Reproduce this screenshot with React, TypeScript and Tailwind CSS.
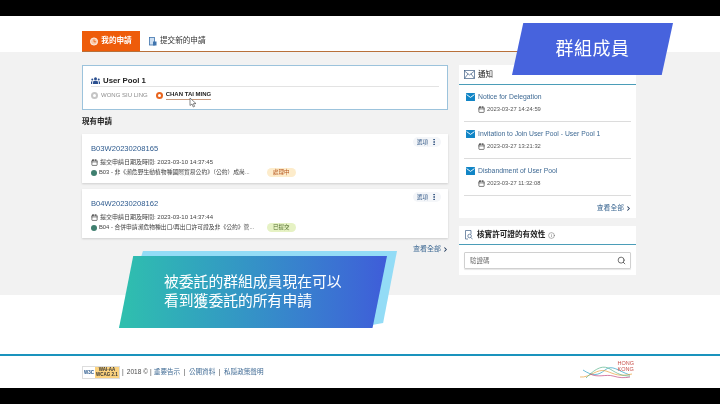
import { Calendar, ChevronRight, Info, MoreVertical, Search } from "lucide-react";

const font = "font-['Liberation_Sans','Noto_Sans_CJK_TC',sans-serif]";

const applications = [
  {
    id: "B03W20230208165",
    submitted: "提交申請日期及時間: 2023-03-10 14:37:45",
    desc: "B03 - 非《瀕危野生動植物種國際貿易公約》（公約）成尚...",
    status: "處理中",
    badge: "bg-[#fdeccb] text-[#b5541c]",
  },
  {
    id: "B04W20230208162",
    submitted: "提交申請日期及時間: 2023-03-10 14:37:44",
    desc: "B04 - 合併申請瀕危物種出口/再出口許可證及非《公約》管...",
    status: "已提交",
    badge: "bg-[#e6f2c4] text-[#4f6b2a]",
  },
];

const notices = [
  { title: "Notice for Delegation", time: "2023-03-27 14:24:59" },
  { title: "Invitation to Join User Pool - User Pool 1", time: "2023-03-27 13:21:32" },
  { title: "Disbandment of User Pool", time: "2023-03-27 11:32:08" },
];

function Person({ className }: { className: string }) {
  return (
    <span className={`flex h-[7px] w-[7px] shrink-0 items-center justify-center rounded-full ${className}`}>
      <span className="h-[3px] w-[3px] rounded-full bg-white" />
    </span>
  );
}

function MailFilled() {
  return (
    <svg width="9" height="8" viewBox="0 0 9 8" className="mt-[1px] shrink-0">
      <rect width="9" height="8" rx="0.6" fill="#1185c6" />
      <path d="M0.6 1.6 4.5 4.4 8.4 1.6" fill="none" stroke="#fff" strokeWidth="0.9" />
    </svg>
  );
}

function HongKongLogo() {
  return (
    <div className="relative h-[20px] w-[54px]">
      <svg width="54" height="20" viewBox="0 0 54 20" className="absolute left-0 top-0" fill="none" strokeWidth="0.7">
        <path d="M3 8C12 14 18 14 25 8S38 9 50 13" stroke="#2a9fc4" />
        <path d="M0 15C10 16 17 6 26 9S38 15 52 12" stroke="#e8a13c" />
        <path d="M6 16C14 8 22 2 30 7S42 14 50 14" stroke="#5bb48c" />
        <path d="M10 12C18 16 26 12 33 14S44 16 50 15" stroke="#c2477f" />
      </svg>
      <span className="absolute right-0 top-[-2px] text-[5.5px] leading-[6px] text-[#c8504a]">
        HONG
        <br />
        KONG
      </span>
    </div>
  );
}

export default function App() {
  return (
    <div className={`relative h-[404px] w-[720px] overflow-hidden bg-white blur-[0.3px] ${font}`}>
      <div className="h-4 bg-black" />

      <div className="flex h-9 items-end bg-white px-[82px]">
        <div className="flex w-full items-end border-b border-[#b8703a]">
          <div className="flex h-5 w-[58px] items-center justify-center gap-[3px] bg-[#ee5c0a] text-[7.6px] font-bold text-white">
            <svg width="8" height="9" viewBox="0 0 8 9" fill="none">
              <circle cx="4" cy="4.5" r="3.6" fill="#f9c9a8" stroke="#fff" strokeWidth="0.8" />
              <path d="M4 2.4V4.8H6" stroke="#ee5c0a" strokeWidth="0.8" />
            </svg>
            我的申請
          </div>
          <div className="ml-[9px] flex h-5 items-center gap-[3px] text-[7.6px] text-[#333]">
            <svg width="8" height="9" viewBox="0 0 8 9" fill="none">
              <rect x="0.5" y="0.5" width="5" height="7.5" fill="#cfe0f2" stroke="#3f74ad" strokeWidth="0.8" />
              <rect x="4" y="4.5" width="3.5" height="4" fill="#3f74ad" />
            </svg>
            提交新的申請
          </div>
        </div>
      </div>

      <div className="flex h-[243px] gap-[11px] bg-[#f2f2f2] pl-[82px] pr-[84px] pt-[13px]">
        <div className="flex w-[366px] flex-col">
          <div className="h-[45px] border border-[#9cc3dc] bg-white px-2 pt-[9px]">
            <div className="flex items-center gap-[3px] border-b border-[#e3e3e3] text-[7.8px] font-bold leading-[11px] text-[#222]">
              <svg width="9" height="7" viewBox="0 0 9 7" fill="#2b4f8f">
                <circle cx="4.5" cy="1.8" r="1.5" />
                <path d="M2 7V5.4C2 4.2 3.2 3.8 4.5 3.8S7 4.2 7 5.4V7Z" />
                <circle cx="1.3" cy="2.6" r="1" />
                <path d="M0 7V5.2C0 4.4.6 4.1 1.6 4.2 1.2 4.6 1.2 5 1.2 7Z" />
                <circle cx="7.7" cy="2.6" r="1" />
                <path d="M9 7V5.2C9 4.4 8.4 4.1 7.4 4.2 7.8 4.6 7.8 5 7.8 7Z" />
              </svg>
              User Pool 1
            </div>
            <div className="mt-[3px] flex items-center text-[6px] leading-[9px]">
              <Person className="bg-[#c5c5c5]" />
              <span className="ml-[3px] text-[#8c8c8c]">WONG SIU LING</span>
              <span className="ml-2">
                <Person className="bg-[#e8651f]" />
              </span>
              <span className="ml-[3px] border-b border-[#c99a7d] font-bold text-[#222]">CHAN TAI MING</span>
            </div>
          </div>

          <div className="mt-[7px] text-[7.5px] font-bold leading-[10px] text-[#222]">現有申請</div>

          <div className="mt-[7px] flex flex-col gap-[6px]">
            {applications.map((a) => (
              <div key={a.id} className="relative h-[49px] bg-white px-[9px] pt-[9px] shadow-[0_1px_2px_rgba(0,0,0,0.15)]">
                <div className="text-[7.6px] leading-[11px] text-[#2d5a8e]">{a.id}</div>
                <div className="mt-[4px] flex items-center gap-[2px] text-[6px] leading-[9px] text-[#444]">
                  <Calendar size={7} strokeWidth={2} className="text-[#222]" />
                  {a.submitted}
                </div>
                <div className="mt-[1px] flex items-center text-[5.8px] leading-[9px] text-[#444]">
                  <span className="mr-[2px] h-[6px] w-[6px] shrink-0 rounded-full bg-[#3f7f6f]" />
                  <span className="w-[159px] shrink-0 whitespace-nowrap">{a.desc}</span>
                  <span className={`ml-[9px] rounded-full px-[6px] text-[5.5px] leading-[9px] ${a.badge}`}>{a.status}</span>
                </div>
                <div className="absolute right-[7px] top-[3px] flex h-[10px] items-center gap-[2px] rounded-full bg-[#f4f6f9] pl-[4px] pr-[3px] text-[5.5px] text-[#3a5f8c]">
                  選項
                  <MoreVertical size={8} strokeWidth={3} className="text-[#2d4f7c]" />
                </div>
              </div>
            ))}
          </div>

          <div className="mt-[6px] flex items-center justify-end text-[7px] leading-[10px] text-[#3f6a94]">
            查看全部
            <ChevronRight size={7} strokeWidth={3.5} className="-mr-px ml-[1px] text-[#223a5c]" />
          </div>
        </div>

        <div className="flex w-[177px] flex-col">
          <div className="h-[153px] bg-white px-[5px]">
            <div className="-mx-[5px] flex h-5 items-center gap-[3px] border-b border-[#4b9db8] px-[5px] text-[7.5px] text-[#222]">
              <svg width="11" height="9" viewBox="0 0 11 9" fill="none" stroke="#3f5f85" strokeWidth="0.7">
                <rect x="0.5" y="0.5" width="10" height="8" />
                <path d="M0.5 1 5.5 5 10.5 1M0.5 8.5 4 3.8M10.5 8.5 7 3.8" />
              </svg>
              通知
            </div>
            {notices.map((n) => (
              <div key={n.title} className="h-[37px] border-b border-[#dcdcdc] pl-[2px] pt-[7px]">
                <div className="flex items-center gap-[3px] text-[6.8px] leading-[9px] text-[#3f6a94]">
                  <MailFilled />
                  {n.title}
                </div>
                <div className="ml-[12px] mt-[4px] flex items-center gap-[2px] text-[5.8px] leading-[9px] text-[#555]">
                  <Calendar size={7} strokeWidth={2} className="text-[#222]" />
                  {n.time}
                </div>
              </div>
            ))}
            <div className="mt-[7px] flex items-center justify-end text-[6.8px] leading-[10px] text-[#3f6a94]">
              查看全部
              <ChevronRight size={7} strokeWidth={3.5} className="-mr-px ml-[1px] text-[#223a5c]" />
            </div>
          </div>

          <div className="mt-2 h-[49px] bg-white">
            <div className="flex h-[19px] items-center gap-[3px] border-b border-[#4b9db8] px-[6px] text-[7.6px] font-bold text-[#222]">
              <svg width="8" height="10" viewBox="0 0 8 10" fill="none" stroke="#3f5f85" strokeWidth="0.7" className="mr-[1px]">
                <path d="M0.5 0.5H6V4M3 9H0.5V0.5" />
                <circle cx="4.6" cy="6" r="1.8" />
                <path d="M6 7.5 7.5 9.3" />
              </svg>
              核實許可證的有效性
              <Info size={7} strokeWidth={1.5} className="text-[#555]" />
            </div>
            <div className="mx-[5px] mt-[7px] flex h-[17px] items-center justify-between rounded-[1px] border border-[#d0d0d0] pl-[5px] pr-1 text-[6.5px] text-[#777] shadow-[0_1px_1px_rgba(0,0,0,0.1)]">
              驗證碼
              <Search size={9} strokeWidth={2} className="text-[#444]" />
            </div>
          </div>
        </div>
      </div>

      <div className="h-[59px] bg-white" />

      <div className="flex h-[34px] items-center justify-between border-t-2 border-[#1a93bd] bg-white pl-[82px] pr-[86px]">
        <div className="flex items-center text-[6.6px] text-[#4a4a4a]">
          <div className="flex h-[13px] w-[38px] border border-[#ddd] text-[4.5px] font-bold leading-[5px]">
            <span className="flex w-[12px] items-center justify-center bg-white text-[#1d4f86]">W3C</span>
            <span className="flex flex-1 flex-col items-center justify-center bg-[#fbd27e] text-[#333]">
              <span>WAI-AA</span>
              <span>WCAG 2.1</span>
            </span>
          </div>
          <span className="ml-[2px] mr-[3px]">|</span>
          <span>2018 ©</span>
          <span className="mx-[2px]">|</span>
          <span className="text-[#3f6a94]">重要告示</span>
          <span className="mx-[3.5px]">|</span>
          <span className="text-[#3f6a94]">公開資料</span>
          <span className="mx-[3.5px]">|</span>
          <span className="text-[#3f6a94]">私隱政策聲明</span>
        </div>
        <HongKongLogo />
      </div>

      <div className="h-4 bg-black" />

      {/* video captions lying over the page */}
      <div className="absolute left-[512px] top-[23px] flex h-[52px] w-[161px] items-center justify-center bg-[#4763dd] text-[18px] tracking-[0.5px] text-white [clip-path:polygon(7%_0,100%_0,93%_100%,0_100%)]">
        群組成員
      </div>
      <div className="absolute left-[119px] top-[251px] h-[77px] w-[278px] bg-[#93dcf6] [clip-path:polygon(8.6%_0,100%_0,95%_93.5%,85%_100%,0_100%)]" />
      <div className="absolute left-[119px] top-[256px] flex h-[72px] w-[268px] flex-col justify-center bg-gradient-to-r from-[#2fc0ad] to-[#3f5cd9] pl-[45px] text-[14.8px] leading-[19px] text-white [clip-path:polygon(5.3%_0,100%_0,94.6%_100%,0_100%)]">
        <div>被委託的群組成員現在可以</div>
        <div>看到獲委託的所有申請</div>
      </div>

      <svg width="8" height="11" viewBox="0 0 8 11" className="absolute left-[189px] top-[97px]">
        <path d="M1 1V8.5L3 7 4.3 10 5.6 9.4 4.4 6.6H7Z" fill="#fff" stroke="#555" strokeWidth="0.7" />
      </svg>
    </div>
  );
}
